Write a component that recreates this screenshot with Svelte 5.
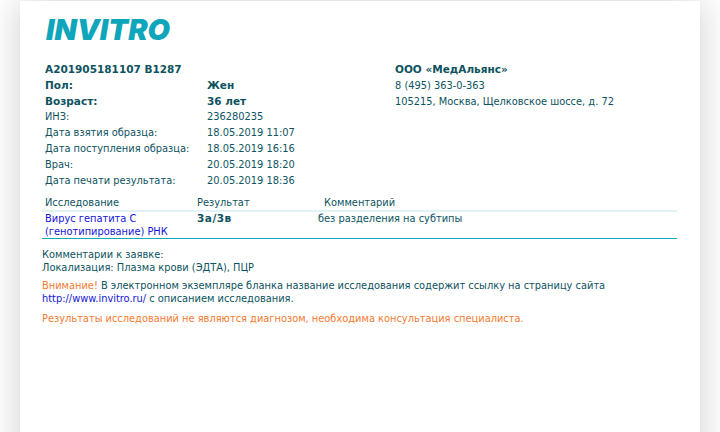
<script>
  const rows = [
    { label: 'Пол:', value: 'Жен', strong: true },
    { label: 'Возраст:', value: '36 лет', strong: true },
    { label: 'ИНЗ:', value: '236280235' },
    { label: 'Дата взятия образца:', value: '18.05.2019 11:07' },
    { label: 'Дата поступления образца:', value: '18.05.2019 16:16' },
    { label: 'Врач:', value: '20.05.2019 18:20' },
    { label: 'Дата печати результата:', value: '20.05.2019 18:36' }
  ];
</script>

<div class="page">
  <div class="sheet">
    <div class="logo">INVITRO</div>

    <div class="info">
      <div class="patient">
        <div class="order">A201905181107 B1287</div>
        {#each rows as row}
          <div class="row" class:strong={row.strong}>
            <span class="label">{row.label}</span>
            <span>{row.value}</span>
          </div>
        {/each}
      </div>
      <div class="lab">
        <div class="order">ООО «МедАльянс»</div>
        <div class="line">8 (495) 363-0-363</div>
        <div class="line">105215, Москва, Щелковское шоссе, д. 72</div>
      </div>
    </div>

    <div class="table">
      <div class="thead">
        <span class="c1">Исследование</span>
        <span class="c2">Результат</span>
        <span class="c3">Комментарий</span>
      </div>
      <div class="tbody">
        <span class="c1 link">Вирус гепатита С (генотипирование) РНК</span>
        <span class="c2 res">3а/3в</span>
        <span class="c3 shift">без разделения на субтипы</span>
      </div>
    </div>

    <div class="notes">
      <p>Комментарии к заявке:<br />Локализация: Плазма крови (ЭДТА), ПЦР</p>
      <p class="tight"><span class="warn">Внимание!</span> В электронном экземпляре бланка название исследования содержит ссылку на страницу сайта<br />
        <span class="link">http://www.invitro.ru/</span> с описанием исследования.</p>
      <p class="warn">Результаты исследований не являются диагнозом, необходима консультация специалиста.</p>
    </div>
  </div>
</div>

<style>
  :global(body) {
    background: #fff;
  }

  .page {
    height: 432px;
    overflow: hidden;
    padding: 1px 20px 0;
    box-sizing: border-box;
    font-family: "DejaVu Sans Condensed", "DejaVu Sans", sans-serif;
    font-stretch: condensed;
    font-size: 10.95px;
    color: #0d5360;
  }

  .sheet {
    height: 480px;
    background: #fff;
    box-shadow: 0 0 34px rgba(0, 0, 0, 0.2);
    padding: 13px 23px 0 22px;
    box-sizing: border-box;
  }

  .logo {
    padding-left: 4px;
    font-family: Inter, sans-serif;
    font-style: italic;
    font-weight: 900;
    font-size: 29px;
    line-height: 32px;
    letter-spacing: 0;
    color: #0fa5ba;
  }

  .info {
    display: flex;
    margin-top: 16px;
    padding-left: 3px;
    line-height: 15.8px;
  }

  .patient {
    width: 350px;
  }

  .order,
  .strong,
  .res {
    font-family: "DejaVu Sans", sans-serif;
    font-stretch: normal;
    font-size: 10.5px;
    font-weight: 700;
  }

  .row {
    display: flex;
  }

  .label {
    width: 162px;
  }

  .table {
    margin-top: 6px;
  }

  .thead,
  .tbody {
    display: flex;
    padding-left: 3px;
  }

  .thead {
    padding-top: 1px;
    line-height: 15px;
    border-bottom: 2px solid #e0f2f6;
  }

  .tbody {
    line-height: 13px;
    border-bottom: 1px solid #12aabf;
  }

  .c1 {
    width: 152px;
  }

  .c2 {
    width: 127px;
  }

  .res {
    letter-spacing: 0.5px;
  }

  .shift {
    margin-left: -6px;
  }

  .link {
    color: #1515d8;
  }

  .notes {
    margin-top: 9px;
    line-height: 13px;
  }

  .notes p {
    margin: 0 0 6px;
  }

  .notes .tight {
    line-height: 12.5px;
    margin-bottom: 7px;
  }

  .warn {
    color: #f47a30;
  }
</style>
